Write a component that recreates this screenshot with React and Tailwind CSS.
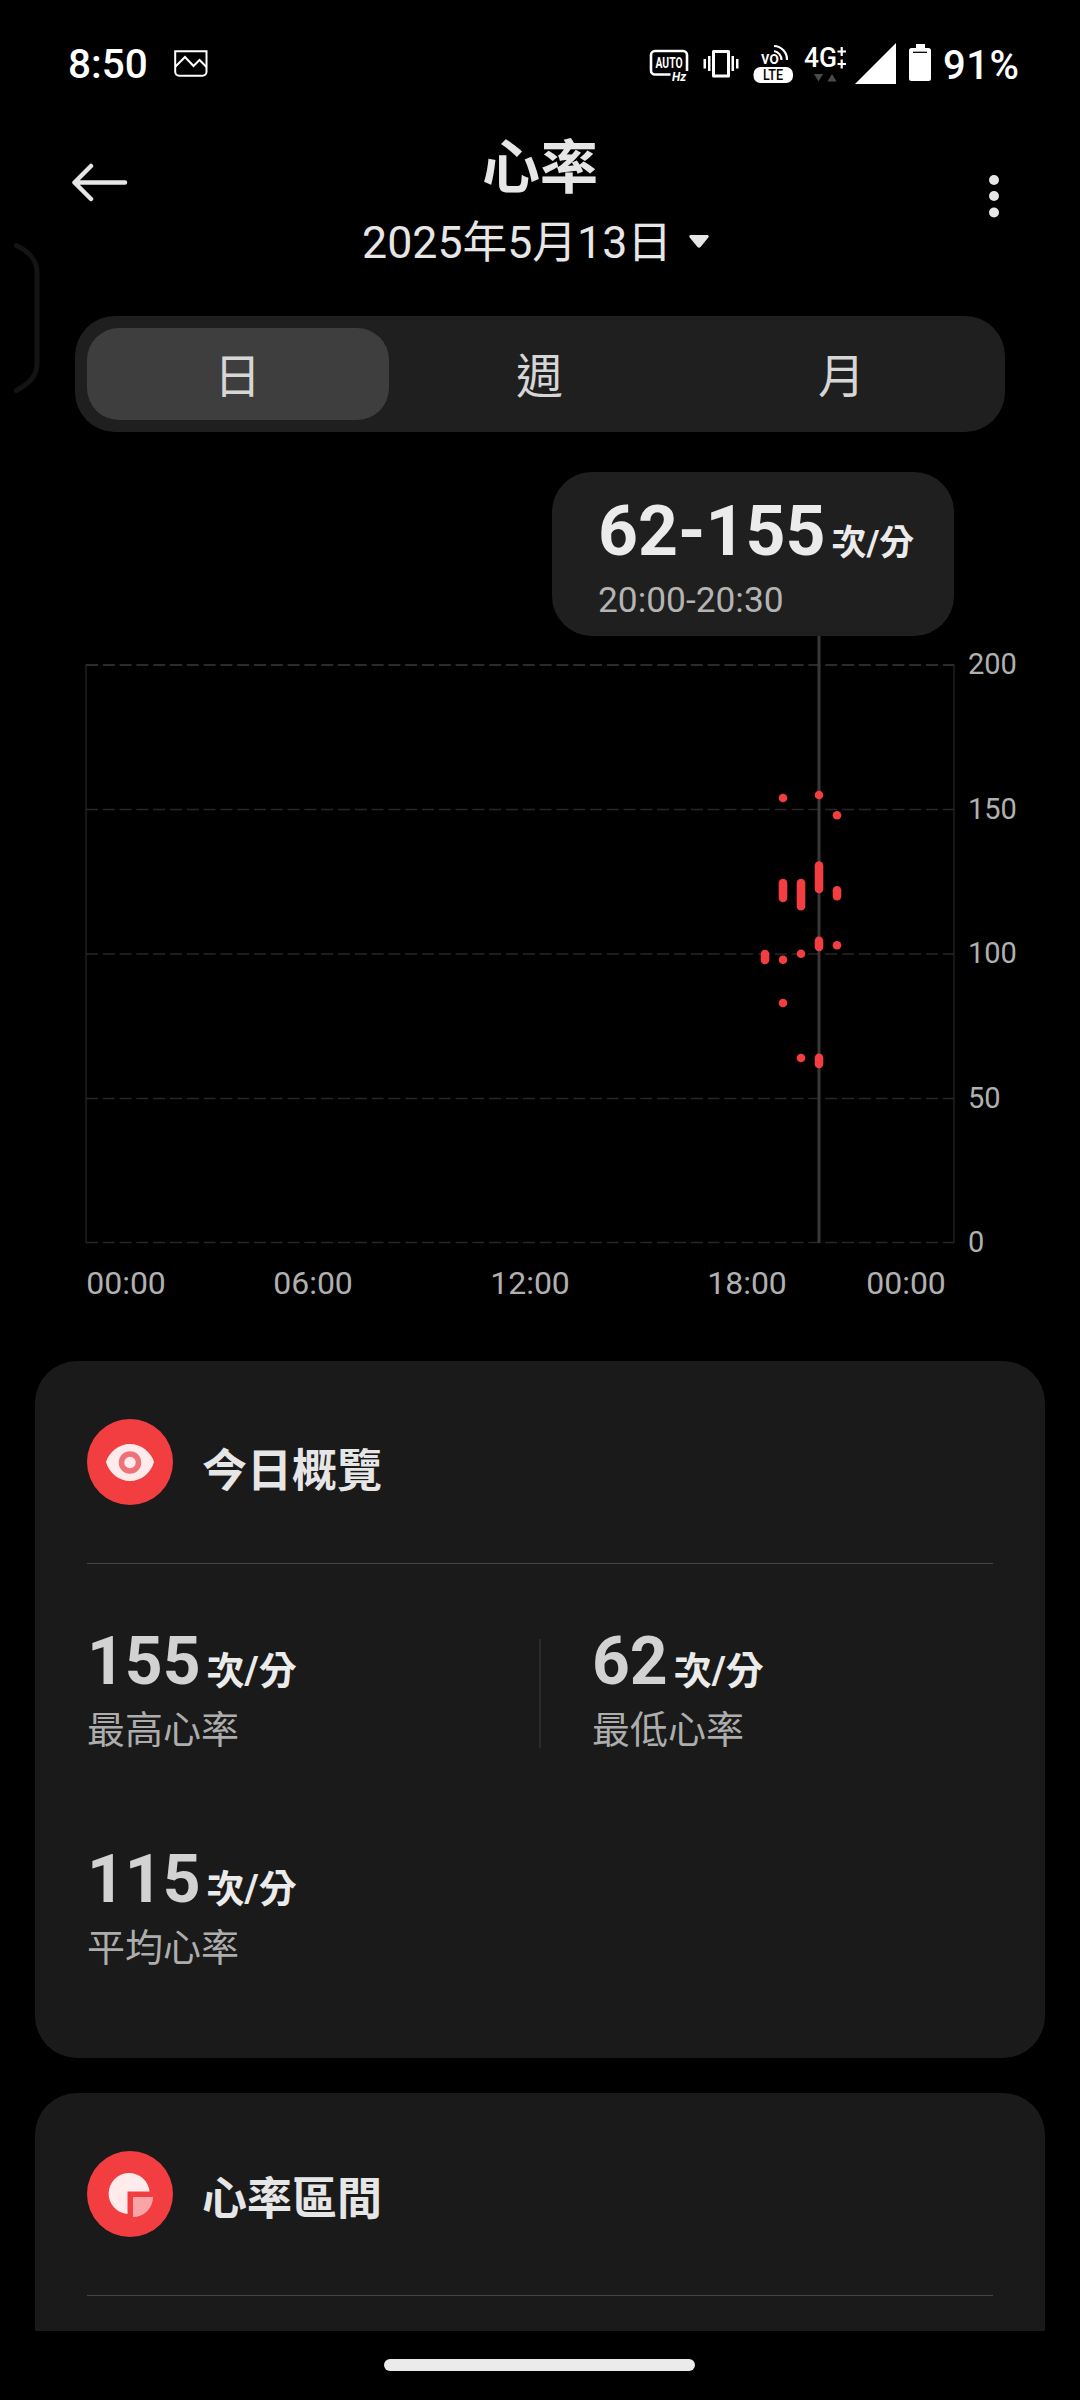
const SANS = "font-['Roboto','Noto_Sans_CJK_TC',sans-serif]";

const SERIES = [
  [765, [[954, 960]]],
  [783, [[798, 798], [883, 898], [959.7, 959.7], [1003, 1003]]],
  [801, [[883, 906.3], [953.7, 953.7], [1058, 1058]]],
  [819, [[795, 795], [865.5, 889], [940.7, 947], [1057.7, 1064]]],
  [837, [[815.3, 815.3], [890.3, 896.3], [945.3, 945.3]]],
];

function StatusBar() {
  return (
    <div className="flex h-[126px] shrink-0 items-center pl-[68px] pr-[50px] text-white">
      <span className="mt-[2px] w-[79px] text-[40.5px] leading-[48px] font-medium">8:50</span>
      <svg className="ml-[27px]" width="34" height="27" viewBox="0 0 34 27" fill="none" stroke="white" strokeWidth="2">
        <path d="M1.2 1.2h31.3v20.6a4 4 0 0 1-4 4H5.2a4 4 0 0 1-4-4z" />
        <path d="M1.5 16.5l9.5-9.5 8.500 9 6-6 7 7" />
      </svg>
      <svg className="ml-auto" width="384" height="60" viewBox="646 33 384 60" fill="white">
        <path d="M670.5 74.500H655a4 4 0 0 1-4-4V55a4 4 0 0 1 4-4h28a4 4 0 0 1 4 4v16" fill="none" stroke="white" strokeWidth="2.6" />
        <text x="669" y="67.500" textAnchor="middle" fontSize="14" fontWeight="700" textLength="27" lengthAdjust="spacingAndGlyphs">AUTO</text>
        <text x="672" y="81" fontSize="12" fontWeight="700" fontStyle="italic">Hz</text>
        <path d="M713.500 51.500h15v24.500h-15z" fill="none" stroke="white" strokeWidth="3" strokeLinejoin="round" />
        <path d="M708 56h2.500v15H708zM703.500 59h2.500v9.500h-2.500zM731.500 56h2.500v15h-2.500zM736 59h2.500v9.500H736z" />
        <text x="761" y="63.500" fontSize="19" fontWeight="500" textLength="18" lengthAdjust="spacingAndGlyphs">vo</text>
        <path d="M774 51a9 9 0 0 1 7.500 9M774 46a13.500 13.500 0 0 1 13 14" fill="none" stroke="white" strokeWidth="2.200" />
        <rect x="753.500" y="67" width="39.500" height="16" rx="7" />
        <text x="773" y="80" textAnchor="middle" fontSize="14" fontWeight="500" textLength="20" lengthAdjust="spacingAndGlyphs" fill="black">LTE</text>
        <text x="804" y="67" fontSize="27" fontWeight="500" textLength="33" lengthAdjust="spacingAndGlyphs">4G</text>
        <path d="M837.500 51.500h8.500M841.700 47v9M837.500 64h8.500M841.700 59.500v9" stroke="white" strokeWidth="2.200" />
        <path d="M814 74h9l-4.500 7.500zM827.500 81.500h9l-4.500-7.500z" fill="#4a4a4a" />
        <path d="M896 43v41h-41z" />
        <path d="M916 44h9v4h3.500a2.500 2.500 0 0 1 2.500 2.500v28a2.500 2.500 0 0 1-2.500 2.500h-17a2.500 2.500 0 0 1-2.500-2.500v-28a2.500 2.500 0 0 1 2.500-2.500h4.500z" />
        <path d="M913 52.300h14" stroke="black" strokeWidth="1.300" />
        <text x="943" y="79" fontSize="40" fontWeight="500" textLength="76" lengthAdjust="spacing">91%</text>
      </svg>
    </div>
  );
}

function Header() {
  return (
    <header className="relative grid h-[190px] shrink-0 grid-cols-[1fr_auto_1fr] items-start pl-[72px] pr-[80px] text-[#e6e6e6]">
      <svg className="mt-[36px]" width="56" height="42" viewBox="0 0 56 42" fill="none" stroke="#e6e6e6" strokeWidth="4.500" strokeLinecap="round" strokeLinejoin="round">
        <path d="M53 20.500H3M19 4L2.500 20.500 19 37" />
      </svg>
      <div className="flex flex-col items-center">
        <h1 className="mt-[4px] pl-[8px] text-[58px] leading-[76px] font-bold">心率</h1>
        <div className="mt-[2px] flex items-center gap-[17px] pr-px">
          <span className="text-[44.7px] leading-[70px]">2025年5月13日</span>
          <svg className="mb-[2px]" width="20" height="14" viewBox="0 0 20 14" fill="#e6e6e6">
            <path d="M1.500 0h17q2 0.500 0.800 2.500L11.500 12q-1.500 1.500-3 0L0.700 2.500Q-0.500 0.500 1.500 0z" />
          </svg>
        </div>
      </div>
      <svg className="mt-[46px] justify-self-end" width="12" height="48" viewBox="0 0 12 48" fill="#e6e6e6">
        <circle cx="6" cy="8" r="5" />
        <circle cx="6" cy="24" r="5" />
        <circle cx="6" cy="40.500" r="5" />
      </svg>
      <svg className="absolute left-0 top-[110px]" width="48" height="164" viewBox="0 236 48 164" fill="none" stroke="#141414" strokeWidth="5" strokeLinecap="round">
        <path d="M16.500 245.500C30 252 37 260 37 273v90c0 13-7 20-20.500 27.500" />
      </svg>
    </header>
  );
}

function Tabs() {
  return (
    <nav className="mx-[75px] grid h-[116px] shrink-0 grid-cols-3 rounded-[40px] bg-[#1f1f1f] p-3 text-[47px] text-[#d6d6d6]">
      <button className="rounded-[32px] bg-[#3e3e3e] pr-px pt-[6px] leading-[86px]">日</button>
      <button className="pr-px pt-[6px] leading-[86px]">週</button>
      <button className="pr-px pt-[6px] leading-[86px]">月</button>
    </nav>
  );
}

function Chart() {
  return (
    <section className="flex h-[929px] shrink-0 flex-col pt-10">
      <div className="ml-[552px] h-[164px] w-[402px] shrink-0 rounded-[40px] bg-[#1f1f1f] pl-[46px] pt-[19px]">
        <div className="flex h-[80px] items-baseline whitespace-nowrap leading-[80px] text-[#ebebeb]">
          <span className="text-[69.7px] font-bold">62-155</span>
          <span className="ml-[6px] text-[35px] font-bold">次/分</span>
        </div>
        <div className="mt-[8px] text-[35.3px] leading-[42px] text-[#b4b4b4]">20:00-20:30</div>
      </div>
      <svg className="shrink-0" width="1080" height="680" viewBox="0 636 1080 680">
        <g stroke="#262626">
          <path d="M86 664.500V1243M954 664.500V1243" strokeWidth="1.500" stroke="#1f1f1f" />
          <path d="M86 665H954" strokeWidth="2" stroke="#2b2b2b" strokeDasharray="12 4.800" />
          <path d="M86 809.500H954M86 954H954M86 1098.500H954M86 1242.500H954" strokeWidth="1.300" strokeDasharray="12 4.800" />
        </g>
        <path d="M819 636V1243" stroke="#383838" strokeWidth="3" />
        <g stroke="#f33e41" strokeWidth="8.600" strokeLinecap="round">
          {SERIES.map(([x, spans]) =>
            spans.map(([a, b]) => <line key={a} x1={x} x2={x} y1={a} y2={b + 0.01} />)
          )}
        </g>
        <g fill="#b0b0b0" fontSize="29">
          <text x="968" y="674">200</text>
          <text x="968" y="818.500">150</text>
          <text x="968" y="963">100</text>
          <text x="968" y="1107.500">50</text>
          <text x="968" y="1251.500">0</text>
        </g>
        <g fill="#b0b0b0" fontSize="32" textAnchor="middle">
          <text x="126" y="1294">00:00</text>
          <text x="313" y="1294">06:00</text>
          <text x="530" y="1294">12:00</text>
          <text x="747" y="1294">18:00</text>
          <text x="906" y="1294">00:00</text>
        </g>
      </svg>
    </section>
  );
}

function CardHeader({ title, titleClass, children }) {
  return (
    <div className="flex h-[203px] items-start border-b border-[#454545] pt-[58px]">
      <svg width="86" height="86" viewBox="0 0 86 86">
        <circle cx="43" cy="43" r="43" fill="#f33e41" />
        {children}
      </svg>
      <h2 className={`ml-[29px] text-[45px] leading-[66px] font-bold text-[#e6e6e6] ${titleClass}`}>{title}</h2>
    </div>
  );
}

function Stat({ value, label }) {
  return (
    <div className="h-[218px]">
      <div className="flex h-[80px] items-baseline leading-[80px]">
        <span className="text-[66px] font-bold text-[#d2d2d2]">{value}</span>
        <span className="ml-[6px] text-[38px] font-bold text-[#ebebeb]">次/分</span>
      </div>
      <div className="mt-px text-[38px] leading-[54px] text-[#adadad]">{label}</div>
    </div>
  );
}

export default function App() {
  return (
    <div className={`flex h-[2400px] w-[1080px] flex-col overflow-hidden bg-black ${SANS}`} lang="zh-Hant">
      <StatusBar />
      <Header />
      <Tabs />
      <Chart />
      <section className="mx-[35px] h-[697px] shrink-0 rounded-[42px] bg-[#1a1a1a] px-[52px]">
        <CardHeader title="今日概覽" titleClass="mt-[20px]">
          <path d="M19 43C22 33 32 25 43 25s21 8 24 18c-3 11-13 19-24 19S22 54 19 43z" fill="#ffebeb" />
          <circle cx="43" cy="43.500" r="8.500" fill="none" stroke="#ee7277" strokeWidth="5.500" />
        </CardHeader>
        <div className="relative grid grid-cols-[505px_1fr] pt-[58px]">
          <Stat value="155" label="最高心率" />
          <Stat value="62" label="最低心率" />
          <Stat value="115" label="平均心率" />
          <div className="absolute left-[452px] top-[75px] h-[109px] w-[2px] bg-[#2b2b2b]" />
        </div>
      </section>
      <section className="mx-[35px] mt-[35px] h-[238px] shrink-0 rounded-t-[42px] bg-[#1a1a1a] px-[52px]">
        <CardHeader title="心率區間" titleClass="mt-[16px]">
          <path d="M62.500 40.500H40.500V63A20.500 20.500 0 1 1 62.500 40.500z" fill="#ffebeb" />
          <path d="M46 46h20A20 20 0 0 1 46 66z" fill="#fba4a6" />
        </CardHeader>
      </section>
      <div className="flex h-[69px] shrink-0 items-start justify-center pr-px pt-[28px]">
        <div className="h-3 w-[311px] rounded-full bg-[#ebebeb]" />
      </div>
    </div>
  );
}
